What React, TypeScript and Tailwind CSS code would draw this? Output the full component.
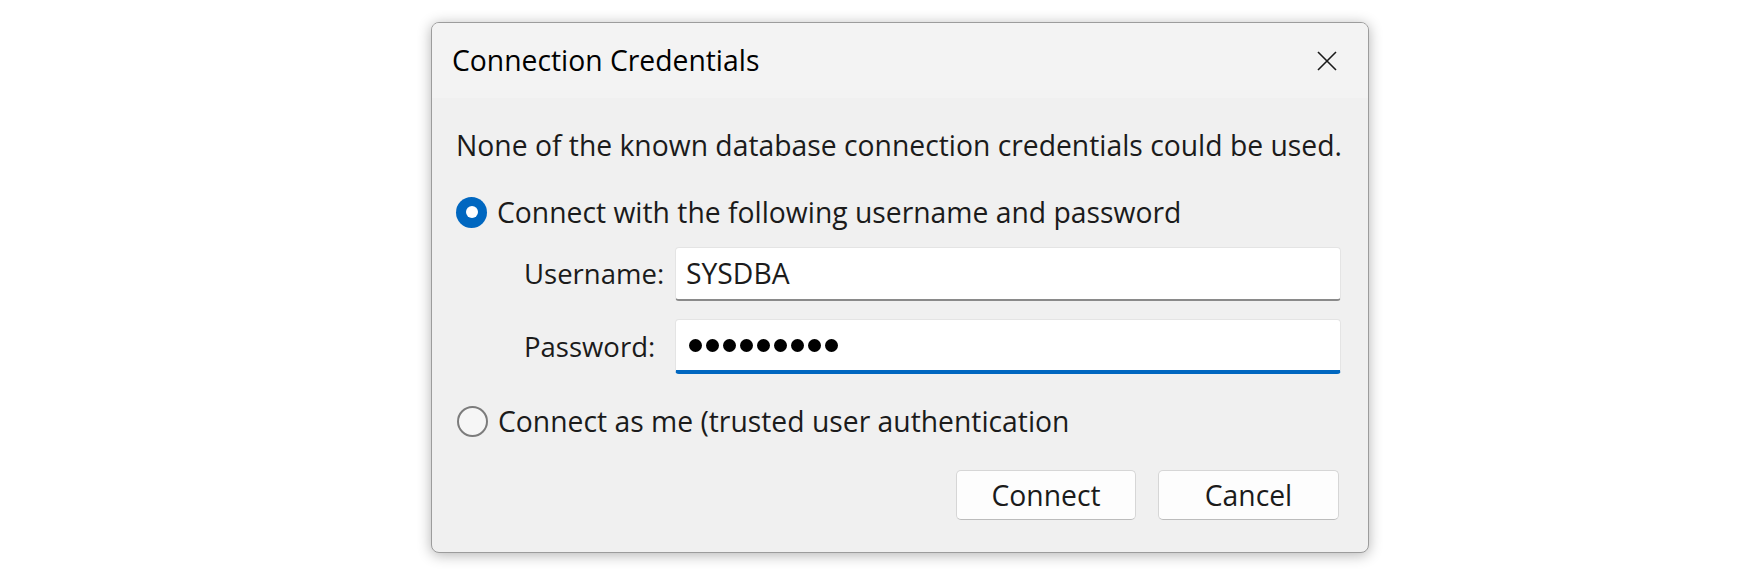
import React from "react";

const font = { fontFamily: '"Open Sans", "Noto Sans", Arial, sans-serif' };

function Radio({ checked }: { checked: boolean }) {
    if (checked) {
        return (
            <span className="flex items-center justify-center w-[31px] h-[31px] rounded-full bg-[#0067c0] shrink-0">
                <span className="w-[12px] h-[12px] rounded-full bg-white" />
            </span>
        );
    }
    return <span className="w-[31px] h-[31px] rounded-full border-2 border-[#7c7c7c] bg-[#f6f6f6] shrink-0" />;
}

export default function App() {
    return (
        <div className="w-[1757px] h-[575px] bg-white overflow-hidden pt-[22px] pl-[431px]" style={font}>
            <div className="w-[938px] h-[531px] rounded-[8px] border border-[#9c9c9c] bg-[#f0f0f0] overflow-hidden shadow-[0_2px_14px_rgba(0,0,0,0.3)] flex flex-col text-[#1b1b1b] whitespace-nowrap">
                {/* Title bar */}
                <div className="h-[75px] shrink-0 bg-[#f3f3f3] flex items-center justify-between pl-[20px] pr-[31px]">
                    <span className="text-[28.3px] text-black">Connection Credentials</span>
                    <svg width="20" height="20" viewBox="0 0 20 20" fill="none" stroke="#1a1a1a" strokeWidth="1.6">
                        <path d="M1 1 L19 19 M19 1 L1 19" />
                    </svg>
                </div>

                {/* Body */}
                <div className="flex flex-col pl-[24px] pr-[27px] pt-[30px] text-[28.3px]">
                    <div className="h-[34px] flex items-center">None of the known database connection credentials could be used.</div>

                    <div className="h-[34px] mt-[33px] flex items-center gap-[10px]">
                        <Radio checked />
                        <span>Connect with the following username and password</span>
                    </div>

                    <div className="grid grid-cols-[151px_1fr] gap-y-[18px] mt-[18px] pl-[68px] items-center">
                        <span className="text-[27.5px]">Username:</span>
                        <div className="h-[54px] bg-white rounded-[4px] border border-[#e4e4e4] border-b-2 border-b-[#8a8a8a] flex items-center pl-[10px]">
                            SYSDBA
                        </div>
                        <span className="text-[27.5px]">Password:</span>
                        <div className="h-[55px] bg-white rounded-[4px] border border-[#e4e4e4] border-b-[4px] border-b-[#0067c0] flex items-center pl-[13px] gap-[4px]">
                            {Array.from({ length: 9 }).map((_, i) => (
                                <span key={i} className="w-[13px] h-[13px] rounded-full bg-black" />
                            ))}
                        </div>
                    </div>

                    <div className="h-[34px] mt-[30px] flex items-center gap-[10px] pl-[1px]">
                        <Radio checked={false} />
                        <span>Connect as me (trusted user authentication</span>
                    </div>

                    <div className="flex justify-end gap-[22px] mt-[32px] pr-[2px]">
                        <button className="w-[180px] h-[50px] rounded-[5px] bg-[#fdfdfd] border border-[#d6d6d6] border-b-[#bcbcbc] text-[28.3px] text-[#1b1b1b]">
                            Connect
                        </button>
                        <button className="w-[181px] h-[50px] rounded-[5px] bg-[#fdfdfd] border border-[#d6d6d6] border-b-[#bcbcbc] text-[28.3px] text-[#1b1b1b]">
                            Cancel
                        </button>
                    </div>
                </div>
            </div>
        </div>
    );
}
